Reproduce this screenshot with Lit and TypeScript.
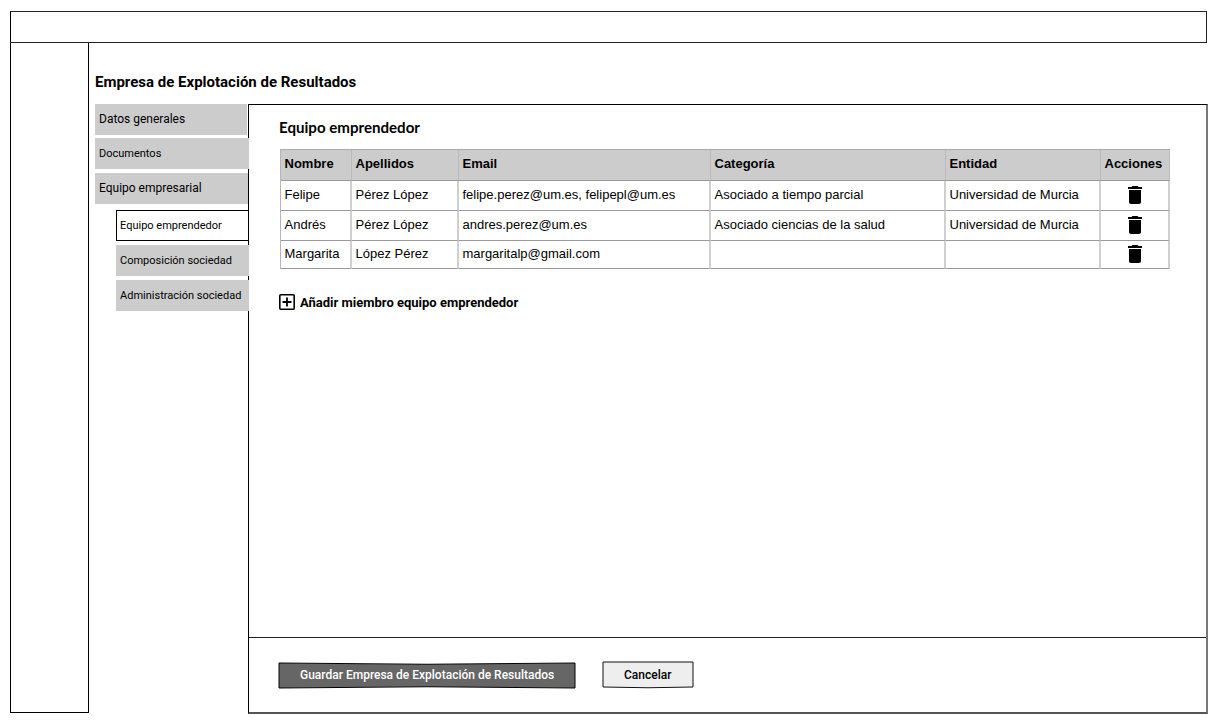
import { LitElement, html, css, svg } from "lit";
import { customElement } from "lit/decorators.js";

const members = [
  ["Felipe", "Pérez López", "felipe.perez@um.es, felipepl@um.es", "Asociado a tiempo parcial", "Universidad de Murcia"],
  ["Andrés", "Pérez López", "andres.perez@um.es", "Asociado ciencias de la salud", "Universidad de Murcia"],
  ["Margarita", "López Pérez", "margaritalp@gmail.com", "", ""],
];
const headers = ["Nombre", "Apellidos", "Email", "Categoría", "Entidad", "Acciones"];

@customElement("app-root")
export class AppRoot extends LitElement {
  static styles = css`
    :host { display: block; width: 1218px; height: 724px; background: #fff; color: #000; overflow: hidden; font-family: Roboto, sans-serif; }
    * { box-sizing: border-box; }
    .shell { display: flex; flex-direction: column; height: 724px; padding: 11px 11px 11px 10px; }
    .top { flex: none; height: 32px; border: 1px solid #222; border-left-color: #000; }
    .main { display: flex; flex: 1; min-height: 0; }
    .rail { width: 79px; height: 670px; border: 1px solid #000; border-top: 0; flex: none; }
    .content { flex: 1; padding: 29px 0 0 6px; min-width: 0; }
    h1 { margin: 0; height: 32px; font-size: 15px; line-height: 20px; font-weight: 700; white-space: nowrap; }
    h2 span, .add span, .btn span, .tab span { white-space: nowrap; }
    .columns { display: flex; }
    .tabs { width: 153px; flex: none; display: flex; flex-direction: column; z-index: 1; }
    .tab { height: 31px; background: #ccc; padding-left: 4px; font-size: 11px; line-height: 31px; width: 154px; margin-bottom: 4px; flex: none; }
    .tab.large { font-size: 12px; line-height: 30px; }
    .tab.first { width: 152px; margin-bottom: 3px; }
    .tab.group { width: 153px; margin-bottom: 6px; }
    .tab.sub { width: 133px; margin-left: 21px; }
    .tab.active { width: 132px; background: #fff; border: 1px solid #000; border-right: 0; padding-left: 3px; line-height: 29px; }
    .panel { width: 960px; height: 610px; border: 1px solid #000; border-right: 2px solid #777; border-bottom: 2px solid #555; display: flex; flex-direction: column; margin-right: -1px; flex: none; }
    .body { flex: 1; padding: 12px 0 0 30px; }
    h2 { margin: 0; height: 32px; font: 700 15.1px/20px Lato, sans-serif; }
    .table { width: 890px; margin-left: 1px; border-top: 1px solid #aaa; border-left: 1px solid #b5b5b5; }
    .row { display: grid; grid-template-columns: 71px 107px 252px 235px 155px 69px; height: 30px; font: 13px/28px "Liberation Sans", Arial, sans-serif; }
    .row.head { height: 31px; background: #ccc; font-weight: 700; line-height: 28px; }
    .row.last { height: 28px; line-height: 26px; }
    .cell { padding-left: 3.5px; border-right: 2px solid #d0d0d0; border-bottom: 1px solid #999; white-space: nowrap; }
    .head .cell { border-right: 1px solid #bbb; }
    .cell.action { padding: 5px 0 0 27px; }
    .last .cell.action { padding-top: 4px; }
    .trash { display: block; }
    .add { display: flex; align-items: center; margin-top: 24px; height: 18px; gap: 5px; font-size: 13px; font-weight: 700; }
    .footer { height: 75px; border-top: 1px solid #222; display: flex; padding: 23px 0 0 29px; gap: 25px; flex: none; }
    .btn { display: grid; width: 299px; height: 29px; font-size: 12px; font-weight: 500; }
    .btn > * { grid-area: 1 / 1; }
    .btn span { line-height: 28px; text-align: center; padding-right: 1.5px; }
    .btn.save span { color: #fff; padding-right: 0.8px; }
    .btn.cancel { width: 93px; }
  `;

  trash() {
    return html`<svg class="trash" width="14" height="18" viewBox="0 0 14 18">
      ${svg`<path d="M1 16c0 1.100.9 2 2 2h8c1.100 0 2-.9 2-2V4H1zM14 1h-3.500l-1-1h-5l-1 1H0v2h14z"/>`}
    </svg>`;
  }

  render() {
    return html`<div class="shell">
      <div class="top"></div>
      <div class="main">
        <div class="rail"></div>
        <div class="content">
          <h1><span>Empresa de Explotación de Resultados</span></h1>
          <div class="columns">
            <nav class="tabs">
              <div class="tab large first"><span>Datos generales</span></div>
              <div class="tab"><span>Documentos</span></div>
              <div class="tab large group"><span>Equipo empresarial</span></div>
              <div class="tab sub active"><span>Equipo emprendedor</span></div>
              <div class="tab sub"><span>Composición sociedad</span></div>
              <div class="tab sub"><span>Administración sociedad</span></div>
            </nav>
            <section class="panel">
              <div class="body">
                <h2><span>Equipo emprendedor</span></h2>
                <div class="table">
                  <div class="row head">${headers.map((h) => html`<div class="cell">${h}</div>`)}</div>
                  ${members.map((m, i) => html`<div class="row ${i === 2 ? "last" : ""}">
                    ${m.map((c) => html`<div class="cell">${c}</div>`)}
                    <div class="cell action">${this.trash()}</div>
                  </div>`)}
                </div>
                <div class="add">
                  <svg width="16" height="16" viewBox="0 0 16 16" fill="none" stroke="#000">
                    <rect x="0.8" y="0.8" width="14.400" height="14.400" rx="1" stroke-width="1.600"/>
                    <path d="M8 3.500v9M3.500 8h9" stroke-width="1.800"/>
                  </svg>
                  <span>Añadir miembro equipo emprendedor</span>
                </div>
              </div>
              <div class="footer">
                <div class="btn save">
                  <svg width="299" height="29" viewBox="0 0 299 29"><path d="M1 2Q149 4.500 297 2V27Q149 24.500 1 27Z" fill="#666" stroke="#000"/></svg>
                  <span>Guardar Empresa de Explotación de Resultados</span>
                </div>
                <div class="btn cancel">
                  <svg width="93" height="29" viewBox="0 0 93 29"><path d="M1 1H91V26Q46 27.500 1 26Z" fill="#eee" stroke="#111"/></svg>
                  <span>Cancelar</span>
                </div>
              </div>
            </section>
          </div>
        </div>
      </div>
    </div>`;
  }
}
